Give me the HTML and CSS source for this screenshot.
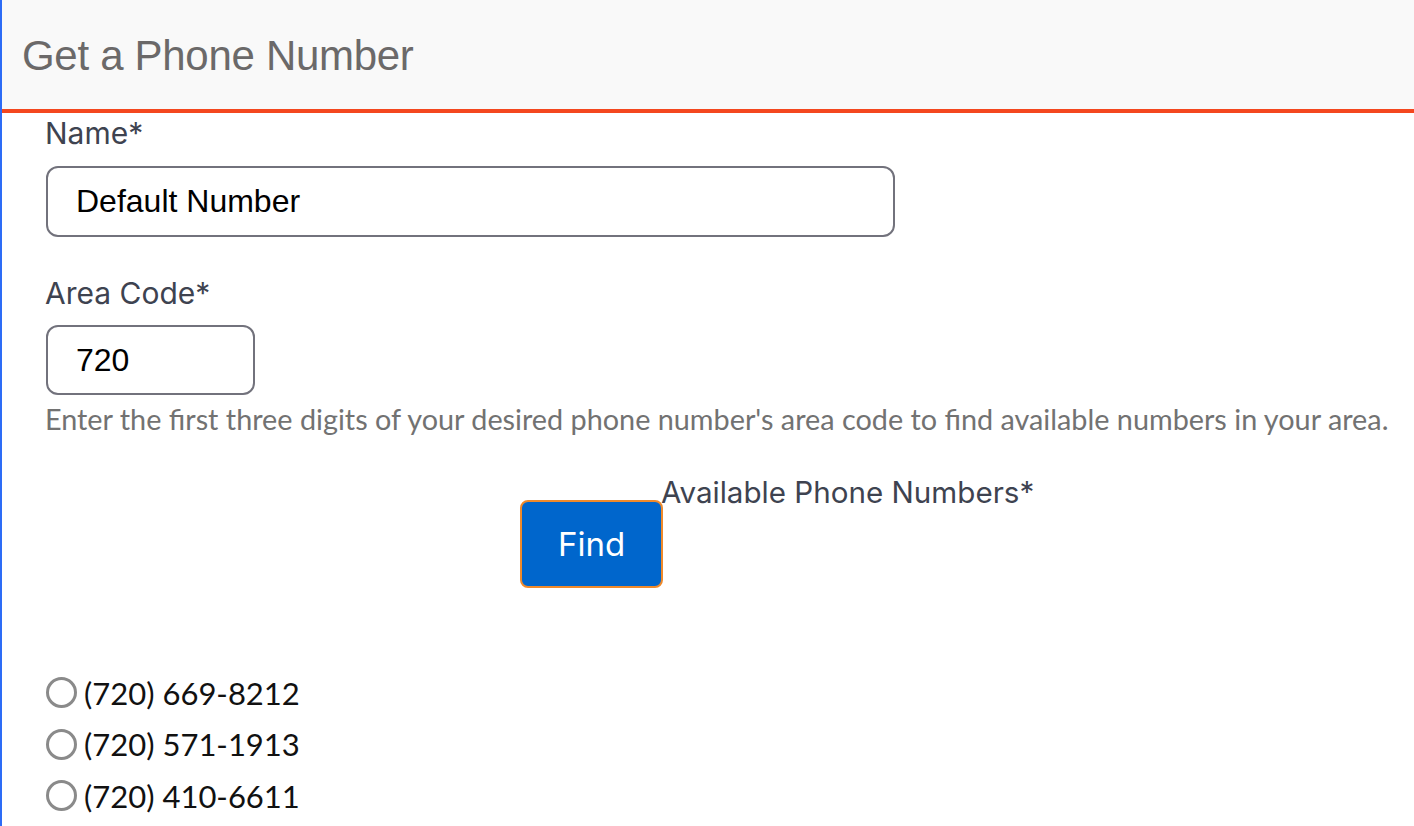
FILE: index.html
```html
<!DOCTYPE html>
<html>
<head>
<meta charset="utf-8">
<link rel="stylesheet" href="styles.css">
</head>
<body>
<div class="panel">
  <header class="panel-header">
    <h1 class="title">Get a Phone Number</h1>
  </header>
  <form class="form">
    <div class="field">
      <label class="label">Name*</label>
      <input class="input input-name" type="text" value="Default Number">
    </div>
    <div class="field field-area">
      <label class="label">Area Code*</label>
      <input class="input input-area" type="text" value="720">
      <p class="help">Enter the first three digits of your desired phone number's area code to find available numbers in your area.</p>
    </div>
    <div class="find-row">
      <button type="button" class="find-btn">Find</button>
      <span class="avail-label">Available Phone Numbers*</span>
    </div>
    <div class="numbers">
      <label class="radio-row"><span class="radio"></span><span class="num">(720) 669-8212</span></label>
      <label class="radio-row"><span class="radio"></span><span class="num">(720) 571-1913</span></label>
      <label class="radio-row"><span class="radio"></span><span class="num">(720) 410-6611</span></label>
    </div>
  </form>
</div>
</body>
</html>
```
FILE: styles.css
```css
html, body {
  margin: 0;
  padding: 0;
  background: #ffffff;
}
.panel {
  border-left: 2px solid #2d6cf6;
  min-height: 826px;
  box-sizing: border-box;
}
.panel-header {
  height: 109px;
  background: #f9f9f9;
  border-bottom: 4px solid #f4471f;
  display: flex;
  align-items: center;
  padding-left: 20px;
}
.title {
  margin: 2px 0 0;
  font-family: "Liberation Sans", Arial, sans-serif;
  font-weight: normal;
  font-size: 42px;
  color: #6b6969;
  letter-spacing: -0.3px;
}
.form {
  padding-left: 43px;
}
.field {
  display: flex;
  flex-direction: column;
  align-items: flex-start;
}
.label {
  font-family: Inter, "Noto Sans", sans-serif;
  font-size: 30px;
  line-height: 34px;
  color: #3e4350;
}
.field .label {
  margin-top: 3px;
  margin-bottom: 16px;
}
.field-area .label {
  margin-top: 39px;
  margin-bottom: 15px;
}
.input {
  box-sizing: border-box;
  height: 71px;
  margin-left: 1px;
  border: 2px solid #72727c;
  border-radius: 12px;
  padding: 0 0 0 28px;
  font-family: "Liberation Sans", Arial, sans-serif;
  font-size: 32px;
  color: #000;
  background: #fff;
  outline: none;
}
.input-name {
  width: 849px;
}
.input-area {
  width: 209px;
  height: 70px;
}
.help {
  margin: 8px 0 0;
  font-family: Lato, "Open Sans", sans-serif;
  font-size: 28.8px;
  line-height: 32px;
  color: #727272;
}
.find-row {
  display: flex;
  align-items: flex-start;
  margin-top: 40px;
  margin-left: 475px;
}
.find-btn {
  margin-top: 25px;
  width: 143px;
  height: 88px;
  background: #0066cc;
  border: 2px solid #ef8a2c;
  border-radius: 8px;
  color: #fff;
  font-family: Inter, "Noto Sans", sans-serif;
  font-size: 33px;
  padding: 0;
}
.avail-label {
  margin-left: -2px;
  font-family: Inter, "Noto Sans", sans-serif;
  font-size: 29.6px;
  line-height: 34px;
  color: #3e4350;
}
.numbers {
  margin-top: 79px;
  display: flex;
  flex-direction: column;
}
.radio-row {
  display: flex;
  align-items: center;
  height: 51.5px;
}
.radio {
  box-sizing: border-box;
  width: 31px;
  height: 31px;
  margin-left: 1px;
  border: 3px solid #8a8a8a;
  border-radius: 50%;
  margin-right: 7px;
}
.num {
  font-family: Lato, "Open Sans", sans-serif;
  font-size: 31px;
  color: #111;
}
```
